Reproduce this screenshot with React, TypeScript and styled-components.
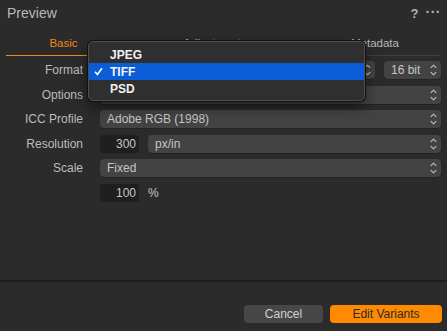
import { createGlobalStyle, styled } from 'styled-components';

const Global = createGlobalStyle`
  html, body {
    margin: 0;
    padding: 0;
    background: #2b2b2b;
  }
  body {
    font-family: "Liberation Sans", Arial, sans-serif;
  }
`;

const Chevrons = () => (
  <svg width="7" height="12" viewBox="0 0 7 12" fill="none">
    <path d="M0.8 3.8 L3.5 1.2 L6.2 3.8" stroke="#c4c4c4" strokeWidth="1.1" />
    <path d="M0.8 8.2 L3.5 10.8 L6.2 8.2" stroke="#c4c4c4" strokeWidth="1.1" />
  </svg>
);

const Check = () => (
  <svg width="9" height="9" viewBox="0 0 9 9" fill="none">
    <path d="M1 4.8 L3.4 7.4 L8 1.2" stroke="#ffffff" strokeWidth="1.6" />
  </svg>
);

const App = () => {
  return (
    <Panel>
      <Global />
      <Header>
        <h1>Preview</h1>
        <div className="actions">
          <span className="help">?</span>
          <span className="more">···</span>
        </div>
      </Header>
      <Tabs>
        <Tab $active $width={115}>Basic</Tab>
        <Tab $width={188}>Adjustments</Tab>
        <Tab $width={132}>Metadata</Tab>
      </Tabs>
      <Form>
        <Row>
          <Label>Format</Label>
          <Controls>
            <Select $flex>
              <span />
              <Chevrons />
            </Select>
            <Select $width={57}>
              <span>16 bit</span>
              <Chevrons />
            </Select>
            <Menu>
              <MenuItem>JPEG</MenuItem>
              <MenuItem $selected>
                <i>
                  <Check />
                </i>
                TIFF
              </MenuItem>
              <MenuItem>PSD</MenuItem>
            </Menu>
          </Controls>
        </Row>
        <Row>
          <Label>Options</Label>
          <Controls>
            <Select $flex>
              <span />
              <Chevrons />
            </Select>
          </Controls>
        </Row>
        <Row>
          <Label>ICC Profile</Label>
          <Controls>
            <Select $flex>
              <span>Adobe RGB (1998)</span>
              <Chevrons />
            </Select>
          </Controls>
        </Row>
        <Row>
          <Label>Resolution</Label>
          <Controls>
            <NumberField>300</NumberField>
            <Select $flex>
              <span>px/in</span>
              <Chevrons />
            </Select>
          </Controls>
        </Row>
        <Row>
          <Label>Scale</Label>
          <Controls>
            <Select $flex>
              <span>Fixed</span>
              <Chevrons />
            </Select>
          </Controls>
        </Row>
        <Row>
          <Label />
          <Controls>
            <NumberField>100</NumberField>
            <Unit>%</Unit>
          </Controls>
        </Row>
      </Form>
      <Footer>
        <Button>Cancel</Button>
        <Button $primary>Edit Variants</Button>
      </Footer>
    </Panel>
  );
};

export default App;

const Panel = styled.div`
  width: 447px;
  height: 331px;
  display: flex;
  flex-direction: column;
  background: #2b2b2b;
  box-sizing: border-box;
`;

const Header = styled.div`
  height: 26px;
  padding: 0 6px 0 7px;
  display: flex;
  align-items: center;
  justify-content: space-between;
  > h1 {
    margin: 0;
    font-size: 14px;
    font-weight: 400;
    color: #b8b8b8;
  }
  .actions {
    display: flex;
    align-items: center;
    gap: 7px;
    color: #b0b0b0;
  }
  .help {
    font-size: 13px;
    font-weight: 700;
  }
  .more {
    font-size: 14px;
    font-weight: 700;
    letter-spacing: 0.5px;
    margin-top: -2px;
  }
`;

const Tabs = styled.div`
  margin: 6px 6px 0;
  height: 23px;
  display: flex;
  border-bottom: 1px solid #3f3f3f;
`;

const Tab = styled.div<{ $active?: boolean; $width: number }>`
  width: ${(p) => p.$width}px;
  display: flex;
  align-items: center;
  justify-content: center;
  font-size: 11.5px;
  padding-bottom: 1px;
  color: ${(p) => (p.$active ? '#f08a1c' : '#b8b8b8')};
  border-bottom: ${(p) => (p.$active ? '1.5px solid #f08a1c' : 'none')};
  margin-bottom: ${(p) => (p.$active ? '-1px' : '0')};
`;

const Form = styled.div`
  display: flex;
  flex-direction: column;
  gap: 6.5px;
  padding: 5px 6px 0 0;
`;

const Row = styled.div`
  display: flex;
  align-items: center;
  height: 18px;
`;

const Label = styled.div`
  width: 83px;
  flex: none;
  text-align: right;
  font-size: 12px;
  color: #bcbcbc;
  margin-right: 17px;
`;

const Controls = styled.div`
  flex: 1;
  display: flex;
  align-items: center;
  gap: 9px;
  height: 100%;
  position: relative;
`;

const Select = styled.div<{ $flex?: boolean; $width?: number }>`
  ${(p) => (p.$flex ? 'flex: 1;' : `width: ${p.$width}px; flex: none;`)}
  height: 18px;
  box-sizing: border-box;
  display: flex;
  align-items: center;
  justify-content: space-between;
  padding: 0 4px 0 7px;
  background: #434343;
  border-radius: 4px;
  font-size: 12px;
  color: #c6c6c6;
  box-shadow: 0 0.5px 0 rgba(0, 0, 0, 0.35);
`;

const NumberField = styled.div`
  width: 39px;
  height: 18px;
  box-sizing: border-box;
  flex: none;
  display: flex;
  align-items: center;
  justify-content: flex-end;
  padding-right: 3px;
  background: #1f1f1f;
  border-radius: 3px;
  font-size: 12px;
  color: #c8c8c8;
`;

const Unit = styled.span`
  font-size: 12px;
  color: #c6c6c6;
`;

const Menu = styled.div`
  position: absolute;
  left: -12px;
  top: -20px;
  width: 277px;
  box-sizing: border-box;
  padding: 4px 0 3px;
  background: #2f2f2f;
  border: 1px solid #4e4e4e;
  border-radius: 5px;
  box-shadow: 0 0 0 1px #111, 0 6px 14px rgba(0, 0, 0, 0.5);
  z-index: 2;
`;

const MenuItem = styled.div<{ $selected?: boolean }>`
  position: relative;
  height: 17px;
  display: flex;
  align-items: center;
  padding-left: 21px;
  font-size: 12px;
  font-weight: 700;
  color: #f2f2f2;
  background: ${(p) => (p.$selected ? '#0b5dd7' : 'transparent')};
  > i {
    position: absolute;
    left: 5px;
    top: 4px;
    display: flex;
  }
`;

const Footer = styled.div`
  margin-top: auto;
  border-top: 2px solid #1d1d1d;
  height: 51px;
  box-sizing: border-box;
  display: flex;
  justify-content: flex-end;
  align-items: flex-end;
  gap: 7px;
  padding: 0 5px 8px 0;
`;

const Button = styled.button<{ $primary?: boolean }>`
  height: 18px;
  padding: 0;
  width: ${(p) => (p.$primary ? '112px' : '79px')};
  border: none;
  border-radius: 4px;
  font-family: "Liberation Sans", Arial, sans-serif;
  font-size: 12px;
  background: ${(p) => (p.$primary ? '#ff8a00' : '#474747')};
  color: ${(p) => (p.$primary ? '#2a2a2a' : '#d2d2d2')};
`;
